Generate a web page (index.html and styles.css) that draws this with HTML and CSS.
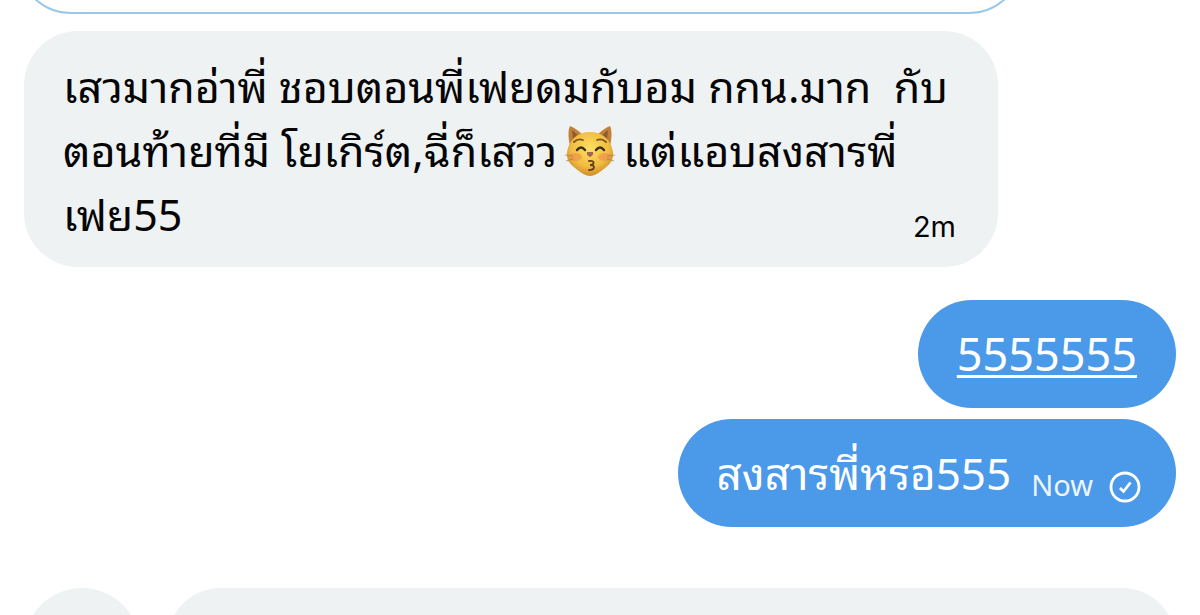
FILE: index.html
```
<!DOCTYPE html>
<html lang="th">
<head>
	<meta charset="utf-8">
	<title>Messages</title>
	<link rel="stylesheet" href="styles.css">
</head>
<body>

<main class="chat">
	<div class="previous">
		<div class="outline"></div>
	</div>

	<section class="message received">
		<p>เสวมากอ่าพี่ ชอบตอนพี่เฟยดมกับอม กกน.มาก&nbsp; กับ<br>ตอนท้ายที่มี โยเกิร์ต,ฉี่ก็เสวว<svg class="emoji" viewBox="0 0 50 52" role="img" aria-label="Kissing cat">
			<defs>
				<radialGradient id="fur" cx="50%" cy="38%" r="62%">
					<stop offset="0" stop-color="#ffdf62"/>
					<stop offset=".65" stop-color="#f0bd42"/>
					<stop offset="1" stop-color="#d08c28"/>
				</radialGradient>
			</defs>
			<path d="M5 21C3 12 3 5 5 1c5 2 10 6 14 10zM45 21c2-9 2-16 0-20-5 2-10 6-14 10z" fill="#c18136"/>
			<path d="M8 15L7 5l8 7zM42 15l1-10-8 7z" fill="#8f5a32"/>
			<path d="M25 7C12 7 4 15 2 27c-1 8 3 12 8 16 5 4 10 8 15 8s10-4 15-8c5-4 9-8 8-16C46 15 38 7 25 7z" fill="url(#fur)"/>
			<ellipse cx="10" cy="32" rx="7" ry="4" fill="#ed824b" opacity=".5"/>
			<ellipse cx="40" cy="32" rx="7" ry="4" fill="#ed824b" opacity=".5"/>
			<path d="M9 17q4-4 9-2M32 15q5-2 9 2" fill="none" stroke="#7d561f" stroke-width="1.8" stroke-linecap="round"/>
			<path d="M12 25q4-5 8 0M31 25q4-5 8 0" fill="none" stroke="#39301e" stroke-width="2.4" stroke-linecap="round"/>
			<path d="M22 27h6q1 3-3 5-4-2-3-5z" fill="#a26458"/>
			<path d="M24 36c7-1 5 4 1 4 6 0 5 5-1 5" fill="none" stroke="#684016" stroke-width="1.8" stroke-linecap="round"/>
			<path d="M0 30l8 1M1 36l7-2M50 30l-8 1M49 36l-7-2" stroke="#9c805c" stroke-width=".7"/>
		</svg>แต่แอบสงสารพี่<br>เฟย55</p>
		<time class="time">2m</time>
	</section>

	<section class="message sent sent-first">
		<p><a href="tel:5555555">5555555</a></p>
	</section>

	<section class="message sent">
		<p>สงสารพี่หรอ555</p>
		<time class="time">Now</time>
		<svg class="status" viewBox="0 0 32 32" role="img" aria-label="Sent">
			<circle cx="16" cy="16" r="14" fill="none" stroke="currentColor" stroke-width="2.8"/>
			<path d="M11 17l3.5 3.5 7-9" fill="none" stroke="currentColor" stroke-width="2.8"/>
		</svg>
	</section>

	<div class="next">
		<div class="avatar"></div>
		<div class="next-message"></div>
	</div>
</main>

</body>
</html>
```
FILE: styles.css
```
* {
	box-sizing: border-box;
}

body {
	margin: 0;
	background: #fff;
	font-family: "Noto Sans", "Noto Sans Thai Looped", "Noto Looped Thai", Loma, Garuda, Umpush, Waree, "Noto Sans Thai", sans-serif;
	color: #050505;
}

.chat {
	display: flex;
	flex-direction: column;
	height: 100vh;
	overflow: hidden;
	padding: 0 24px;
}

.previous {
	display: flex;
	align-items: flex-end;
	flex: none;
	height: 14px;
	margin: 0 153px 17px -7px;
	overflow: hidden;
}

.outline {
	flex: 1;
	height: 120px;
	border: 2px solid #9bc8e8;
	border-radius: 54px;
}

.message {
	display: flex;
	flex: none;
	align-items: flex-end;
	border-radius: 54px;
	padding: 24px 39px 20px;
	font-size: 43px;
	line-height: 64px;
	white-space: nowrap;
}

.message p {
	margin: 0;
}

.received {
	justify-content: space-between;
	position: relative;
	margin-right: 178px;
	background: #eef2f3;
}

.received .time {
	position: absolute;
	right: 42px;
	bottom: 20px;
	font-family: Inter, sans-serif;
}

.emoji {
	width: 50px;
	height: 52px;
	margin: 0 8px;
	vertical-align: -10px;
}

.sent {
	align-self: flex-end;
	margin-top: 11px;
	padding: 22px 39px;
	background: #4b99e9;
	color: #fff;
	font-size: 44px;
}

.sent-first {
	margin-top: 33px;
	font-size: 45px;
}

.sent a {
	color: inherit;
	text-decoration-thickness: 3px;
	text-underline-offset: 4px;
}

.time {
	font-size: 29px;
	line-height: 40px;
}

.sent .time {
	margin-left: 20px;
	opacity: .9;
}

.status {
	width: 32px;
	height: 32px;
	margin: 0 -4px 2px 16px;
}

.next {
	display: flex;
	flex: none;
	gap: 27px;
	margin-top: 61px;
}

.avatar {
	flex: none;
	width: 116px;
	height: 116px;
	border-radius: 50%;
	background: #eef2f3;
}

.next-message {
	flex: 1;
	height: 116px;
	border-radius: 54px;
	background: #eef2f3;
}
```
